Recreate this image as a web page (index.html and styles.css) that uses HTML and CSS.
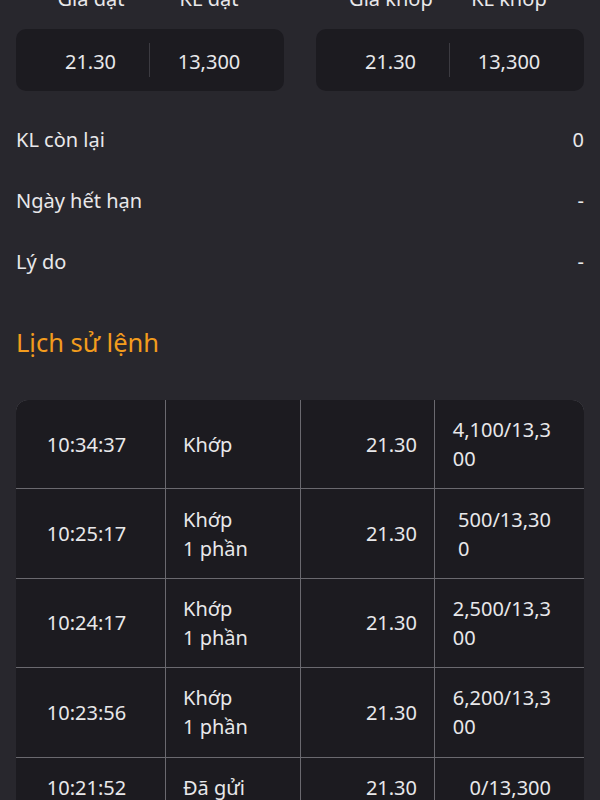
FILE: index.html
```html
<!DOCTYPE html>
<html lang="vi">
<head>
    <meta charset="UTF-8">
    <meta name="viewport" content="width=device-width, initial-scale=1.0">
    <title>Chi tiết lệnh</title>
    <link rel="stylesheet" href="styles.css">
</head>
<body>
    <div class="page">
        <!-- Order / match summary -->
        <div class="summary">
            <div class="summary-group">
                <div class="summary-labels">
                    <span>Giá đặt</span>
                    <span>KL đặt</span>
                </div>
                <div class="summary-card">
                    <div class="summary-cell">21.30</div>
                    <div class="summary-cell">13,300</div>
                </div>
            </div>
            <div class="summary-group">
                <div class="summary-labels">
                    <span>Giá khớp</span>
                    <span>KL khớp</span>
                </div>
                <div class="summary-card">
                    <div class="summary-cell">21.30</div>
                    <div class="summary-cell">13,300</div>
                </div>
            </div>
        </div>

        <!-- Detail rows -->
        <div class="detail-list">
            <div class="detail-row"><span>KL còn lại</span><span>0</span></div>
            <div class="detail-row"><span>Ngày hết hạn</span><span>-</span></div>
            <div class="detail-row"><span>Lý do</span><span>-</span></div>
        </div>

        <h2 class="section-title">Lịch sử lệnh</h2>

        <!-- History table -->
        <div class="history">
            <div class="cell cell-time">10:34:37</div>
            <div class="cell cell-status">Khớp</div>
            <div class="cell cell-price">21.30</div>
            <div class="cell cell-qty"><span>4,100/13,3<br>00</span></div>

            <div class="cell cell-time">10:25:17</div>
            <div class="cell cell-status">Khớp<br>1 phần</div>
            <div class="cell cell-price">21.30</div>
            <div class="cell cell-qty"><span>500/13,30<br>0</span></div>

            <div class="cell cell-time">10:24:17</div>
            <div class="cell cell-status">Khớp<br>1 phần</div>
            <div class="cell cell-price">21.30</div>
            <div class="cell cell-qty"><span>2,500/13,3<br>00</span></div>

            <div class="cell cell-time">10:23:56</div>
            <div class="cell cell-status">Khớp<br>1 phần</div>
            <div class="cell cell-price">21.30</div>
            <div class="cell cell-qty"><span>6,200/13,3<br>00</span></div>

            <div class="cell cell-time">10:21:52</div>
            <div class="cell cell-status">Đã gửi</div>
            <div class="cell cell-price">21.30</div>
            <div class="cell cell-qty"><span>0/13,300</span></div>
        </div>
    </div>
</body>
</html>
```

FILE: styles.css
```css
/* Global styles */
body {
    margin: 0;
    padding: 0;
    background-color: #28272d;
    color: #e8e8ea;
    font-family: "Noto Sans", "Open Sans", Arial, sans-serif;
    font-size: 20px;
    line-height: 29px;
}

.page {
    padding: 0 16px 40px;
    overflow: hidden;
}

/* Summary cards */
.summary {
    display: grid;
    grid-template-columns: 1fr 1fr;
    gap: 32px;
    margin-top: -16px;
}

.summary-labels,
.summary-card {
    display: grid;
    grid-template-columns: 1fr 1fr;
    padding: 0 16px;
    text-align: center;
}

.summary-labels {
    margin-bottom: 16px;
}

.summary-card {
    padding: 14px 16px;
    background-color: #1c1b20;
    border-radius: 10px;
}

.summary-cell {
    padding-top: 3px;
    line-height: 31px;
}

.summary-cell:first-child {
    border-right: 1px solid #3c3b41;
}

/* Detail rows */
.detail-list {
    margin-top: 18px;
}

.detail-row {
    display: flex;
    justify-content: space-between;
    padding: 16px 0;
}

/* Section title */
.section-title {
    margin: 32px 0 40px;
    color: #f39c1d;
    font-size: 25.5px;
    font-weight: normal;
    line-height: 36px;
}

/* History table */
.history {
    display: grid;
    grid-template-columns: 149px 134px 133px 149px;
    gap: 1px;
    background-color: #6a696f;
    border-radius: 12px;
    overflow: hidden;
}

.cell {
    display: flex;
    align-items: center;
    padding: 15.2px 17px;
    background-color: #1c1b20;
}

.cell-time {
    justify-content: center;
    padding-right: 25px;
}

.cell-price {
    justify-content: flex-end;
}

.cell-qty {
    justify-content: flex-end;
    padding-right: 33px;
}

.cell-qty span {
    text-align: left;
}
```
